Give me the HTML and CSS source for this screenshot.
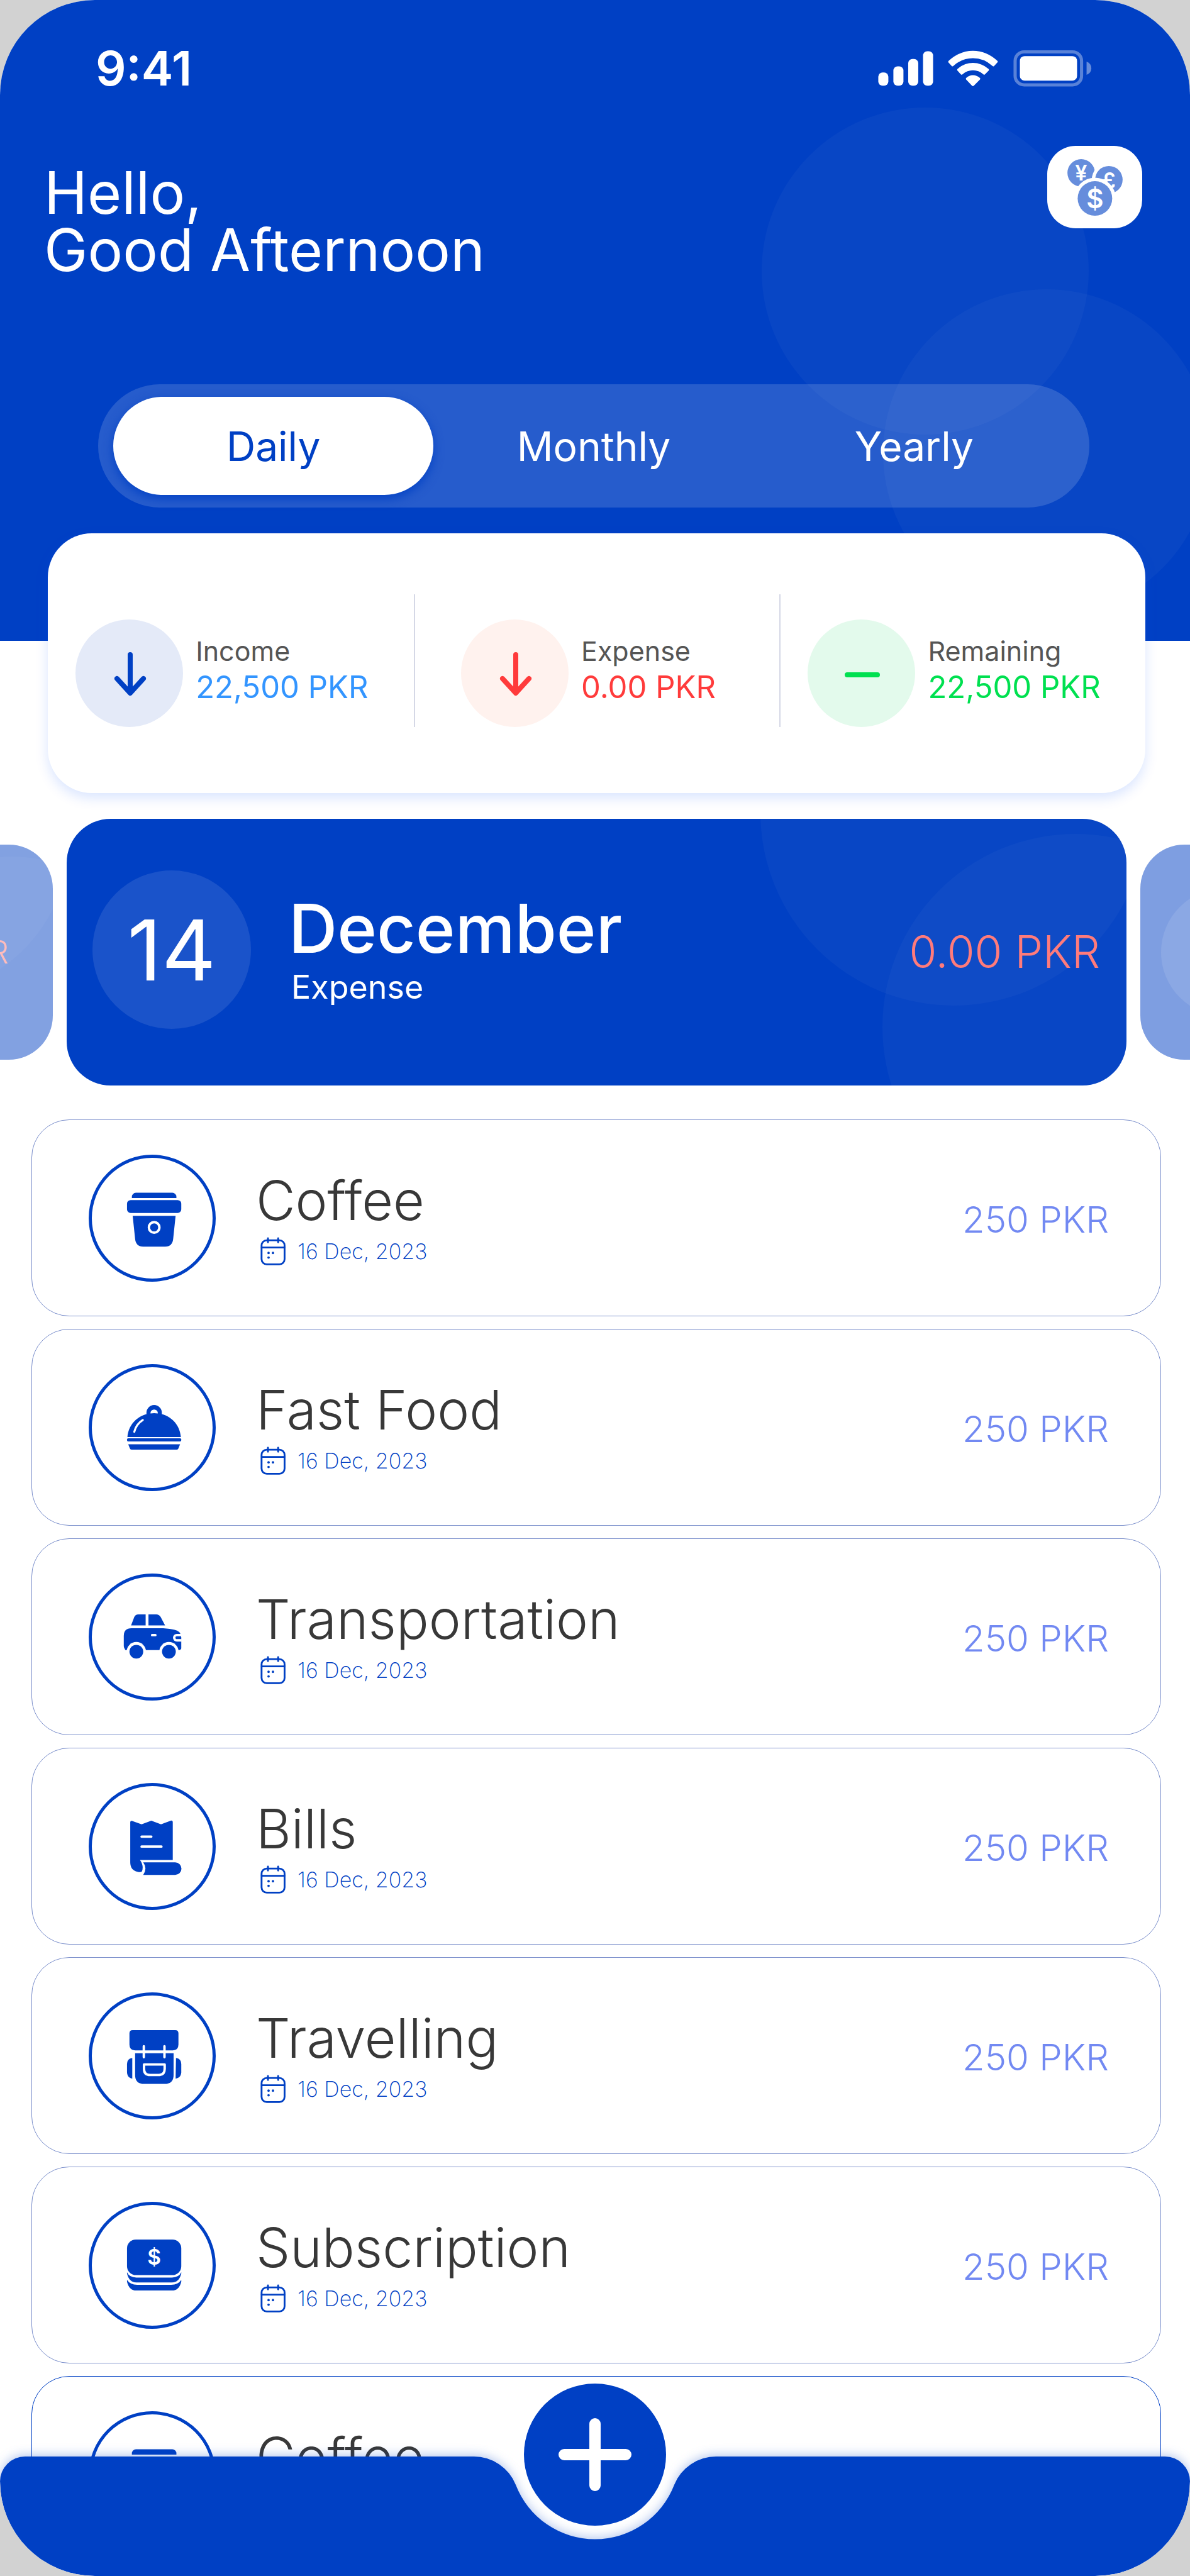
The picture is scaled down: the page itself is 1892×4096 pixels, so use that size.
FILE: index.html
```html
<!DOCTYPE html>
<html lang="en">
<head>
<meta charset="utf-8">
<meta name="viewport" content="width=device-width, initial-scale=1">
<title>Expense Tracker</title>
<link rel="stylesheet" href="styles.css">
</head>
<body>
<svg class="sprite" aria-hidden="true">
  <symbol id="calendar" viewBox="589 313 66 72">
    <g fill="none" stroke="currentColor" stroke-width="4.5" stroke-linecap="round">
      <rect x="593.5" y="321" width="57.5" height="60" rx="13"/>
      <path d="M594 339H651M609.500 316v10M635 316v10"/>
    </g>
    <g fill="currentColor"><circle cx="611" cy="352.500" r="3"/><circle cx="622" cy="352.500" r="3"/><circle cx="611" cy="364" r="3"/></g>
  </symbol>
  <symbol id="coffee" viewBox="244 186 160 160">
    <path fill="currentColor" d="M273 217v-3a10 10 0 0 1 10-10h90a10 10 0 0 1 10 10v3z"/>
    <rect fill="currentColor" x="261" y="222" width="134" height="32" rx="9"/>
    <path fill="currentColor" d="M275 261H381L375 318Q373 337 355 337H301Q283 337 281 318Z"/>
    <circle cx="328" cy="289.500" r="13" fill="none" stroke="#fff" stroke-width="6"/>
  </symbol>
  <symbol id="food" viewBox="244 704 160 160">
    <path fill="currentColor" d="M309 756v-8a19 19 0 0 1 38 0v8zM262 808C265 773 293 749 328 749S391 773 394 808Z"/>
    <path fill="#fff" d="M319 750V748a9 8 0 0 1 18 0V750Q328 748 319 750Z"/>
    <path fill="none" stroke="#fff" stroke-width="5" stroke-linecap="round" d="M279 795Q284 776 300 766"/>
    <rect fill="currentColor" x="261" y="811" width="134" height="8" rx="3"/>
    <path fill="currentColor" d="M264 826H392L388 836Q387 839 384 839H272Q269 839 268 836Z"/>
  </symbol>
  <symbol id="car" viewBox="244 1222 160 160">
    <path fill="currentColor" d="M271 1274L279 1253Q282 1247 289 1247H307V1274ZM314 1247H333Q340 1247 344 1253L355 1274H314Z"/>
    <path fill="currentColor" d="M253 1300Q253 1281 272 1281H350Q386 1283 392 1293Q395 1298 395 1304V1330Q395 1334 390 1335H257Q253 1330 253 1325Z"/>
    <path fill="none" stroke="#fff" stroke-width="6" d="M396 1298H384a6 6 0 0 0 0 13H396"/>
    <rect x="320" y="1295" width="14" height="6" rx="3" fill="#fff"/>
    <circle cx="284" cy="1339" r="24" fill="#fff"/><circle cx="364.500" cy="1339" r="24" fill="#fff"/>
    <circle cx="284" cy="1339" r="17" fill="currentColor"/><circle cx="364.500" cy="1339" r="17" fill="currentColor"/>
  </symbol>
  <symbol id="bill" viewBox="244 184 160 160">
    <path fill="currentColor" d="M269 204Q270 200 274 202L297 210L321 201L345 210L369 201Q374 200 374 205V298H293Q303 312 298 326Q296 329 290 328Q269 325 269 304Z"/>
    <path fill="currentColor" d="M301 304H380A15.500 15.500 0 0 1 380 335H301Q312 319 301 304Z"/>
    <path stroke="#fff" stroke-width="6" stroke-linecap="round" d="M297 240.500H321M297 265H346"/>
  </symbol>
  <symbol id="backpack" viewBox="244 702 160 160">
    <path fill="currentColor" d="M267 727Q267 719 275 719H380Q388 719 388 727V755Q388 769 374 769H281Q267 769 267 755Z"/>
    <path fill="currentColor" d="M281 776H376V830Q376 852 354 852H303Q281 852 281 830ZM274 788V839Q262 837 261 824V803Q261 790 274 788ZM382 788Q395 790 395 803V824Q394 837 381 839Z"/>
    <path fill="none" stroke="#fff" stroke-width="6" stroke-linecap="round" d="M302.500 759V786M353.500 759V786"/>
    <path fill="none" stroke="#fff" stroke-width="6" stroke-linejoin="round" d="M303 804H354V815Q354 830 339 830H318Q303 830 303 815Z"/>
  </symbol>
  <symbol id="cash" viewBox="244 1219 160 160">
    <rect fill="currentColor" x="261" y="1236" width="134" height="88" rx="22"/>
    <path fill="currentColor" d="M261 1317Q267 1330 284 1330H372Q389 1330 395 1317V1320Q390 1342 372 1342H284Q266 1342 261 1320ZM261 1336Q269 1348 286 1348H370Q387 1348 395 1336V1340Q390 1362 372 1362H284Q266 1362 261 1340Z"/>
    <text class="coin-sign" x="328" y="1298" font-size="52">$</text>
  </symbol>
</svg>

<main class="phone">
  <header class="hero">
    <span class="orb orb-a"></span><span class="orb orb-b"></span>
    <div class="status">
      <span class="clock">9:41</span>
      <svg class="signals" viewBox="1661 93 404 70" role="img" aria-label="Signal, Wi-Fi and battery">
        <g fill="#fff">
          <rect x="1661.500" y="136" width="19" height="25" rx="8"/>
          <rect x="1690" y="124.500" width="19" height="36.500" rx="8"/>
          <rect x="1718" y="110.500" width="19" height="50.500" rx="8"/>
          <rect x="1746" y="96" width="19" height="65" rx="8"/>
          <path d="M1794.400 114Q1815 95 1840.300 95T1886.500 114Q1888 115.500 1886.500 117L1880 124Q1878.500 125 1877 123.500Q1861 109 1840.300 109T1803.500 123.500Q1802 125 1800.500 124L1794 117Q1793 115.500 1794.400 114Z"/>
          <path d="M1811 129.500Q1824 118 1840.300 118T1870 129.500Q1871 131 1870 132.500L1863 139.500Q1861.500 141 1860 139.500Q1851 132 1840.300 132T1820.500 139.500Q1819 141 1817.500 139.500L1811 132.500Q1810 131 1811 129.500Z"/>
          <path d="M1827.500 146.500Q1833 141 1840.300 141T1853.500 146.500Q1855 148 1853.500 149.500L1842 161Q1840.300 162.500 1838.500 161L1827.500 149.500Q1826 148 1827.500 146.500Z"/>
          <rect x="1929" y="105" width="108" height="46.500" rx="9"/>
        </g>
        <rect x="1920" y="97" width="125.500" height="62.500" rx="17" fill="none" stroke="#fff" stroke-opacity=".35" stroke-width="6"/>
        <path fill="#fff" fill-opacity=".4" d="M2055 115.500Q2064 119 2064 128T2055 140.500Z"/>
      </svg>
    </div>
    <div class="welcome">
      <h1 class="greeting">Hello,<br>Good Afternoon</h1>
      <button class="currency" type="button" aria-label="Change currency">
        <svg viewBox="176 150 313 321" aria-hidden="true">
          <circle cx="254" cy="228" r="78" fill="#668ddc"/>
          <text class="coin-sign" x="254" y="272" font-size="122">¥</text>
          <circle cx="411" cy="267" r="97" fill="#fff"/>
          <circle cx="411" cy="267" r="78" fill="#668ddc"/>
          <text class="coin-sign" x="411" y="315" font-size="122">£</text>
          <circle cx="332" cy="373" r="118" fill="#fff"/>
          <circle cx="332" cy="373" r="98" fill="#668ddc"/>
          <text class="coin-sign" x="332" y="427" font-size="150">$</text>
        </svg>
      </button>
    </div>
    <nav class="periods" aria-label="Period">
      <button class="period period-on" type="button" aria-pressed="true">Daily</button>
      <button class="period" type="button" aria-pressed="false">Monthly</button>
      <button class="period" type="button" aria-pressed="false">Yearly</button>
    </nav>
  </header>

  <section class="summary" aria-label="Summary">
    <div class="stat income">
      <span class="badge"><svg viewBox="0 0 60 76" aria-hidden="true"><path d="M31 8V68M10 46L31 69L52 46"/></svg></span>
      <p class="figures"><span class="label">Income</span><span class="value">22,500 PKR</span></p>
    </div>
    <div class="stat expense">
      <span class="badge"><svg viewBox="0 0 60 76" aria-hidden="true"><path d="M31 8V68M10 46L31 69L52 46"/></svg></span>
      <p class="figures"><span class="label">Expense</span><span class="value">0.00 PKR</span></p>
    </div>
    <div class="stat remaining">
      <span class="badge"><svg viewBox="0 0 60 76" aria-hidden="true"><path d="M7 40H55"/></svg></span>
      <p class="figures"><span class="label">Remaining</span><span class="value">22,500 PKR</span></p>
    </div>
  </section>

  <section class="carousel" aria-label="Days">
    <div class="side side-prev" aria-hidden="true">
      <span class="orb orb-c"></span><span class="orb orb-d"></span>
      <span class="side-amount">0.00 PKR</span>
    </div>
    <article class="day">
      <span class="orb orb-e"></span><span class="orb orb-f"></span>
      <span class="date">14</span>
      <div class="day-text">
        <h2 class="month">December</h2>
        <p class="kind">Expense</p>
      </div>
      <span class="day-amount">0.00 PKR</span>
    </article>
    <div class="side side-next" aria-hidden="true"><span class="side-date"></span></div>
  </section>

  <ul class="list">
    <li class="row"><span class="ring"><svg><use href="#coffee"/></svg></span><div class="info"><h3 class="name">Coffee</h3><p class="when"><svg><use href="#calendar"/></svg>16 Dec, 2023</p></div><span class="amount">250 PKR</span></li>
    <li class="row"><span class="ring"><svg><use href="#food"/></svg></span><div class="info"><h3 class="name">Fast Food</h3><p class="when"><svg><use href="#calendar"/></svg>16 Dec, 2023</p></div><span class="amount">250 PKR</span></li>
    <li class="row"><span class="ring"><svg><use href="#car"/></svg></span><div class="info"><h3 class="name">Transportation</h3><p class="when"><svg><use href="#calendar"/></svg>16 Dec, 2023</p></div><span class="amount">250 PKR</span></li>
    <li class="row"><span class="ring"><svg><use href="#bill"/></svg></span><div class="info"><h3 class="name">Bills</h3><p class="when"><svg><use href="#calendar"/></svg>16 Dec, 2023</p></div><span class="amount">250 PKR</span></li>
    <li class="row"><span class="ring"><svg><use href="#backpack"/></svg></span><div class="info"><h3 class="name">Travelling</h3><p class="when"><svg><use href="#calendar"/></svg>16 Dec, 2023</p></div><span class="amount">250 PKR</span></li>
    <li class="row"><span class="ring"><svg><use href="#cash"/></svg></span><div class="info"><h3 class="name">Subscription</h3><p class="when"><svg><use href="#calendar"/></svg>16 Dec, 2023</p></div><span class="amount">250 PKR</span></li>
    <li class="row row-strong"><span class="ring"><svg><use href="#coffee"/></svg></span><div class="info"><h3 class="name">Coffee</h3><p class="when"><svg><use href="#calendar"/></svg>16 Dec, 2023</p></div><span class="amount">250 PKR</span></li>
  </ul>

  <footer class="dock">
    <div class="dock-bar">
      <span class="dock-side dock-left"></span>
      <svg class="dock-notch" viewBox="0 0 386 190" aria-hidden="true"><path d="M0 0A72 72 0 0 1 67 45A135 135 0 0 0 319 45A72 72 0 0 1 386 0V190H0Z"/></svg>
      <span class="dock-side dock-right"></span>
    </div>
    <button class="add" type="button" aria-label="Add expense"><svg viewBox="0 0 116 116" aria-hidden="true"><path d="M58 9V107M9 58H107"/></svg></button>
  </footer>
</main>
</body>
</html>
```
FILE: styles.css
```css
:root {
  --blue: #0040c4;
}

* {
  box-sizing: border-box;
  margin: 0;
  padding: 0;
}

body {
  background: #d2d2d2;
  font-family: Inter, "Open Sans", sans-serif;
  font-weight: 400;
}

button {
  border: 0;
  font: inherit;
  cursor: pointer;
}

.sprite {
  position: absolute;
  width: 0;
  height: 0;
}

.phone {
  position: relative;
  height: 100vh;
  overflow: hidden;
  border-radius: 151px;
  background: #fff;
}

.coin-sign {
  fill: #fff;
  font-family: Inter, sans-serif;
  font-weight: 600;
  text-anchor: middle;
}

/* Decorative translucent circles behind the blue surfaces */
.orb {
  position: absolute;
  border-radius: 50%;
  background: rgba(255, 255, 255, .03);
}

.orb-a { width: 520px; height: 520px; top: 171px; right: 161px; }
.orb-b { width: 520px; height: 520px; top: 460px; right: -32px; }
.orb-c { width: 496px; height: 496px; top: -256px; right: -26px; }
.orb-d { width: 496px; height: 496px; top: 19px; right: -182px; }
.orb-e { width: 614px; height: 614px; top: -317px; right: -32px; }
.orb-f { width: 614px; height: 614px; top: 24px; right: -226px; }

/* Header */
.hero {
  position: relative;
  overflow: hidden;
  padding: 58px 0 212px;
  background: var(--blue);
  color: #fff;
}

.status {
  position: relative;
  display: flex;
  align-items: center;
  justify-content: space-between;
  padding: 0 156px 0 152px;
}

.clock {
  font-size: 76px;
  line-height: 100px;
  font-weight: 600;
}

.signals {
  width: 340px;
  height: 59px;
}

.welcome {
  position: relative;
  display: flex;
  align-items: flex-start;
  justify-content: space-between;
  padding: 74px 76px 0 70px;
}

.greeting {
  padding-top: 29px;
  font-size: 93px;
  line-height: 91px;
  font-weight: 400;
}

.currency {
  display: grid;
  place-items: center;
  width: 151px;
  height: 131px;
  border-radius: 45px;
  background: #fff;
}

.currency svg {
  width: 88px;
  height: 90px;
}

.periods {
  position: relative;
  display: grid;
  grid-template-columns: repeat(3, 1fr);
  margin: 168px 160px 0 156px;
  padding: 20px 24px;
  border-radius: 99px;
  background: rgba(255, 255, 255, .15);
}

.period {
  height: 156px;
  border-radius: 78px;
  background: none;
  color: #fff;
  font-size: 64px;
}

.period-on {
  background: #fff;
  color: var(--blue);
  box-shadow: 0 6px 16px rgba(0, 64, 196, .9);
}

/* Summary card */
.summary {
  position: relative;
  display: grid;
  grid-template-columns: repeat(3, 1fr);
  margin: -171px 71px 0 76px;
  padding: 97px 0 105px;
  border-radius: 70px;
  background: #fff;
  box-shadow: 0 8px 20px rgba(0, 80, 255, .15);
}

.stat {
  display: flex;
  align-items: flex-end;
  justify-content: center;
  gap: 20px;
  height: 211px;
  padding-right: 28px;
}

.stat + .stat {
  border-left: 2px solid #d5d8e6;
}

.badge {
  display: grid;
  place-items: center;
  width: 171px;
  height: 171px;
  border-radius: 50%;
}

.badge svg {
  width: 60px;
  height: 76px;
  fill: none;
  stroke: currentColor;
  stroke-width: 8;
  stroke-linecap: round;
  stroke-linejoin: round;
}

.figures {
  display: flex;
  flex-direction: column;
  justify-content: center;
  height: 171px;
  padding-bottom: 14px;
  line-height: 58px;
}

.label {
  color: #555;
  font-size: 43px;
}

.value {
  font-size: 49px;
}

.income .badge { background: #e4eaf8; color: var(--blue); }
.income .value { color: #3395ff; }
.expense .badge { background: #fff2ee; color: #ff3b3b; }
.expense .value { color: #ff3b3b; }
.remaining .badge { background: #e3faec; color: #00e050; }
.remaining .value { color: #00e050; }

/* Day carousel */
.carousel {
  display: grid;
  grid-template-columns: 84px 1fr 79px;
  align-items: center;
  gap: 22px;
  margin-top: 41px;
}

.side {
  position: relative;
  display: flex;
  align-items: center;
  height: 342px;
  overflow: hidden;
  background: var(--blue);
  opacity: .5;
}

.side-prev {
  justify-content: flex-end;
  padding-right: 70px;
  border-radius: 0 70px 70px 0;
}

.side-next {
  padding-left: 33px;
  border-radius: 70px 0 0 70px;
}

.side-amount {
  position: relative;
  flex: none;
  color: #ff7b7b;
  font-size: 50px;
  font-weight: 300;
}

.side-date {
  flex: none;
  width: 204px;
  height: 204px;
  border-radius: 50%;
  background: rgba(255, 255, 255, .1);
}

.day {
  position: relative;
  display: flex;
  align-items: center;
  height: 424px;
  padding: 0 42px 8px 41px;
  overflow: hidden;
  border-radius: 70px;
  background: var(--blue);
  color: #fff;
}

.date {
  display: grid;
  place-items: center;
  width: 252px;
  height: 252px;
  border-radius: 50%;
  background: rgba(255, 255, 255, .1);
  font-size: 134px;
}

.day-text {
  flex: 1;
  padding-left: 60px;
}

.month {
  font-size: 107px;
  line-height: 112px;
  font-weight: 500;
}

.kind {
  margin-top: 8px;
  padding-left: 4px;
  font-size: 52px;
  line-height: 60px;
}

.day-amount {
  position: relative;
  padding-top: 6px;
  color: #ff7b7b;
  font-size: 71px;
  font-weight: 300;
}

/* Transactions */
.list {
  display: flex;
  flex-direction: column;
  gap: 20px;
  margin: 54px 46px 0 50px;
  list-style: none;
}

.row {
  display: flex;
  align-items: center;
  height: 313px;
  padding: 0 82px 0 90px;
  border: 1px solid #7c90cc;
  border-radius: 60px;
}

.row-strong {
  border-color: var(--blue);
}

.ring {
  display: grid;
  place-items: center;
  width: 202px;
  height: 202px;
  border: 5px solid var(--blue);
  border-radius: 50%;
  color: var(--blue);
}

.ring svg {
  width: 103px;
  height: 103px;
}

.info {
  flex: 1;
  padding-left: 64px;
}

.name {
  color: #383838;
  font-size: 86px;
  line-height: 96px;
  font-weight: 300;
}

.when {
  display: flex;
  align-items: center;
  gap: 18px;
  margin-top: 10px;
  padding-left: 6px;
  color: var(--blue);
  font-size: 34px;
  line-height: 46px;
  font-weight: 200;
}

.when svg {
  width: 42px;
  height: 46px;
}

.amount {
  padding-top: 4px;
  color: #7289f2;
  font-size: 58px;
  font-weight: 300;
}

/* Bottom dock, laid over the end of the list */
.dock {
  position: absolute;
  right: 0;
  bottom: 0;
  left: 0;
}

.dock-bar {
  display: flex;
  height: 190px;
  filter: drop-shadow(0 -3px 8px rgba(0, 64, 196, .28));
}

.dock-side {
  flex: 1;
  background: var(--blue);
}

.dock-left {
  border-radius: 40px 0 0 151px;
}

.dock-right {
  border-radius: 0 40px 151px 0;
}

.dock-notch {
  width: 386px;
  height: 190px;
  fill: var(--blue);
}

.add {
  position: absolute;
  bottom: 80px;
  left: calc(50% - 113px);
  display: grid;
  place-items: center;
  width: 226px;
  height: 226px;
  border-radius: 50%;
  background: var(--blue);
}

.add svg {
  width: 116px;
  height: 116px;
  stroke: #fff;
  stroke-width: 18;
  stroke-linecap: round;
}
```
